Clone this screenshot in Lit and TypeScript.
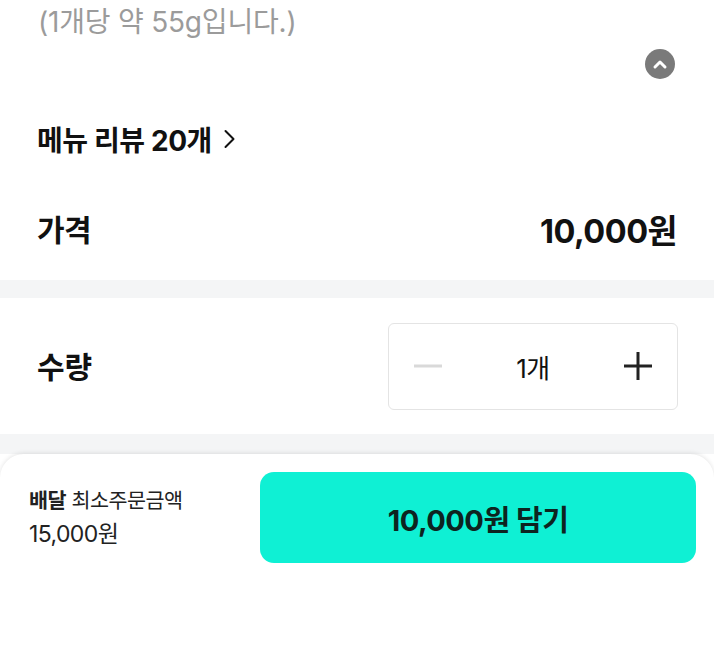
import { LitElement, html, css } from 'lit';
import { customElement, property } from 'lit/decorators.js';

@customElement('app-root')
export class AppRoot extends LitElement {
  @property({ type: Number })
  quantity = 1;

  static styles = css`
    :host {
      display: block;
      width: 714px;
      height: 653px;
      overflow: hidden;
      background: #fff;
      color: #111;
      font-family: Inter, 'Noto Sans CJK KR', sans-serif;
    }

    .note {
      height: 44px;
      padding-left: 38px;
      font-size: 28px;
      line-height: 44px;
      letter-spacing: -0.2px;
      color: #9b9b9b;
    }

    .collapse-row {
      display: flex;
      justify-content: flex-end;
      height: 30px;
      padding: 5px 39px 0 0;
    }

    .collapse {
      display: flex;
      align-items: center;
      justify-content: center;
      width: 30px;
      height: 30px;
      border-radius: 50%;
      background: #7a7a7a;
    }

    .review {
      display: flex;
      align-items: center;
      gap: 11px;
      height: 40px;
      margin-top: 40px;
      padding-left: 37px;
      font-size: 28px;
      font-weight: 700;
      letter-spacing: -0.4px;
    }

    .price {
      display: flex;
      align-items: center;
      justify-content: space-between;
      height: 46px;
      margin-top: 46px;
      padding: 0 37px;
      font-size: 30px;
      font-weight: 700;
      letter-spacing: -0.6px;
    }

    .price .amount {
      font-size: 32.5px;
      letter-spacing: -0.5px;
    }

    .band {
      height: 18px;
      margin-top: 29px;
      background: #f4f5f6;
    }

    .quantity {
      display: flex;
      align-items: center;
      justify-content: space-between;
      height: 136px;
      padding: 0 37px;
      font-size: 30px;
      font-weight: 700;
      box-sizing: border-box;
    }

    .quantity .label {
      padding-bottom: 2px;
    }

    .stepper {
      display: grid;
      grid-template-columns: 78px 1fr 78px;
      align-items: center;
      justify-items: center;
      box-sizing: border-box;
      width: 290px;
      height: 87px;
      margin-right: -1px;
      border: 1px solid #e4e4e4;
      border-radius: 6px;
      font-size: 26px;
      font-weight: 400;
      letter-spacing: -0.6px;
    }

    .sheet-wrap {
      height: 219px;
      padding-top: 20px;
      box-sizing: border-box;
      overflow: hidden;
      background: linear-gradient(#f4f5f6 0, #f4f5f6 20px, #fff 20px);
    }

    .sheet {
      display: flex;
      justify-content: space-between;
      height: 199px;
      box-sizing: border-box;
      padding: 18px 18px 0 29px;
      border-radius: 24px 24px 0 0;
      background: #fff;
      box-shadow: 0 -1px 4px rgba(0, 0, 0, 0.1);
    }

    .minimum {
      display: flex;
      flex-direction: column;
      gap: 5px;
      padding-top: 15px;
      font-size: 20.7px;
      line-height: 28px;
      letter-spacing: -0.5px;
      color: #222;
    }

    .minimum b {
      font-weight: 700;
    }

    .minimum .fee {
      font-size: 23px;
      letter-spacing: -0.6px;
    }

    .add {
      display: flex;
      align-items: center;
      justify-content: center;
      width: 436px;
      height: 91px;
      border-radius: 14px;
      background: #0ff0d4;
      font-size: 29px;
      font-weight: 700;
      letter-spacing: -0.5px;
      color: #0d2420;
    }
  `;

  render() {
    return html`
      <div class="note">(1개당 약 55g입니다.)</div>
      <div class="collapse-row">
        <div class="collapse">
          <svg width="16" height="12" viewBox="0 0 16 12" fill="none">
            <path d="M3 9l5-5 5 5" stroke="#fff" stroke-width="3" stroke-linecap="round" stroke-linejoin="round" />
          </svg>
        </div>
      </div>
      <div class="review">
        <span>메뉴 리뷰 20개</span>
        <svg width="14" height="22" viewBox="0 0 14 22" fill="none">
          <path d="M2.5 3l8 8-8 8" stroke="#111" stroke-width="2" stroke-linecap="round" stroke-linejoin="round" />
        </svg>
      </div>
      <div class="price"><span>가격</span><span class="amount">10,000원</span></div>
      <div class="band"></div>
      <div class="quantity">
        <span class="label">수량</span>
        <div class="stepper">
          <svg width="28" height="4" viewBox="0 0 28 4"><rect width="28" height="3" y="0.5" fill="#d9d9d9" /></svg>
          <span>${this.quantity}개</span>
          <svg width="28" height="28" viewBox="0 0 28 28">
            <path d="M0 14h28M14 0v28" stroke="#222" stroke-width="3" />
          </svg>
        </div>
      </div>
      <div class="sheet-wrap">
        <div class="sheet">
          <div class="minimum">
            <span><b>배달</b> 최소주문금액</span>
            <span class="fee">15,000원</span>
          </div>
          <div class="add">10,000원 담기</div>
        </div>
      </div>
    `;
  }
}
